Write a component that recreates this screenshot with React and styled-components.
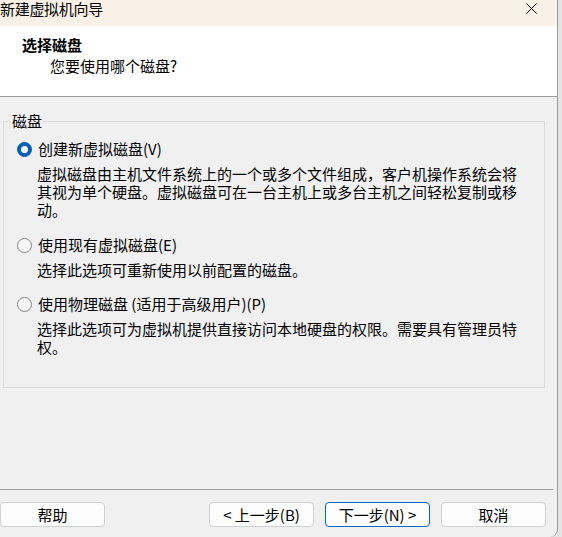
import React from "react";
import styled, { createGlobalStyle } from "styled-components";

// global
const GlobalStyle = createGlobalStyle`
	html, body {
		margin: 0;
		padding: 0;
		background: #e4e4e4;
	}
	body {
		font-family: "Noto Sans CJK SC", "Noto Sans", sans-serif;
		font-size: 15px;
		color: #000;
	}
`;

// window frame
const Window = styled.div`
	width: 557px;
	height: 537px;
	border-right: 1px solid #9c9c9c;
	background: #f0f0f0;
	display: flex;
	flex-direction: column;
	overflow: hidden;
	border-bottom-right-radius: 8px;
`;

const TitleBar = styled.div`
	height: 26px;
	background: #f9f1e7;
	display: flex;
	align-items: flex-start;
	justify-content: space-between;
	flex-shrink: 0;
`;

const TitleText = styled.span`
	font-size: 15px;
	line-height: 18px;
	letter-spacing: -0.3px;
`;

const CloseButton = styled.div`
	width: 46px;
	height: 20px;
	display: grid;
	place-items: center;
	margin-right: 3px;
	margin-top: -2px;
`;

// header
const Header = styled.div`
	height: 71px;
	background: #fff;
	border-bottom: 1px solid #a0a0a0;
	padding: 9px 0 0 22px;
	box-sizing: border-box;
	flex-shrink: 0;
`;

const HeaderTitle = styled.div`
	font-weight: 700;
	line-height: 20px;
`;

const HeaderSub = styled.div`
	line-height: 20px;
	margin: 1px 0 0 28px;
`;

// body
const Body = styled.div`
	height: 392px;
	padding: 15px 12px 0 3px;
	box-sizing: border-box;
	flex-shrink: 0;
`;

const GroupBox = styled.fieldset`
	margin: 0;
	padding: 9px 10px 31px 7px;
	border: 1px solid #dcdcdc;
	border-radius: 0;
	min-width: 0;
`;

const Legend = styled.legend`
	padding: 0 1px;
	line-height: 18px;
`;

const Option = styled.div`
	margin-left: 6px;
	margin-bottom: ${(p) => p.$gap}px;
`;

const OptionRow = styled.label`
	display: flex;
	align-items: center;
	gap: 6px;
	height: 20px;
	line-height: 20px;
`;

const Radio = styled.span`
	width: 15px;
	height: 15px;
	border-radius: 50%;
	box-sizing: border-box;
	flex-shrink: 0;
	display: grid;
	place-items: center;
	background: ${(p) => (p.$checked ? "#005fb8" : "#f6f6f6")};
	border: 1px solid ${(p) => (p.$checked ? "#005fb8" : "#868686")};

	&::after {
		content: "";
		display: ${(p) => (p.$checked ? "block" : "none")};
		width: 7px;
		height: 7px;
		border-radius: 50%;
		background: #fff;
	}
`;

const Description = styled.div`
	width: 485px;
	margin: 6px 0 0 20px;
	line-height: 18px;
`;

// footer
const Separator = styled.div`
	height: 1px;
	background: #a0a0a0;
	margin-right: 4px;
	flex-shrink: 0;
`;

const Footer = styled.div`
	display: flex;
	align-items: center;
	padding: 12px 11px 0 0;
`;

const ButtonGroup = styled.div`
	display: flex;
	gap: 11px;
	margin-left: auto;
`;

const Button = styled.button`
	width: 105px;
	height: 25px;
	padding: 0;
	box-sizing: border-box;
	font-family: inherit;
	font-size: 15px;
	line-height: 20px;
	color: #000;
	background: #fdfdfd;
	border: 1px solid ${(p) => (p.$primary ? "#0067c0" : "#d0d0d0")};
	border-radius: 4px;
`;

const options = [
	{
		label: "创建新虚拟磁盘(V)",
		checked: true,
		desc: "虚拟磁盘由主机文件系统上的一个或多个文件组成，客户机操作系统会将其视为单个硬盘。虚拟磁盘可在一台主机上或多台主机之间轻松复制或移动。",
		gap: 16,
	},
	{
		label: "使用现有虚拟磁盘(E)",
		desc: "选择此选项可重新使用以前配置的磁盘。",
		gap: 15,
	},
	{
		label: "使用物理磁盘 (适用于高级用户)(P)",
		desc: "选择此选项可为虚拟机提供直接访问本地硬盘的权限。需要具有管理员特权。",
		gap: 0,
	},
];

export default function App() {
	return (
		<>
			<GlobalStyle />
			<Window>
				<TitleBar>
					<TitleText>新建虚拟机向导</TitleText>
					<CloseButton>
						<svg width="11" height="11" viewBox="0 0 11 11">
							<path d="M0.5 0.5 L10.5 10.5 M10.5 0.5 L0.5 10.5" stroke="#000" strokeWidth="1" />
						</svg>
					</CloseButton>
				</TitleBar>
				<Header>
					<HeaderTitle>选择磁盘</HeaderTitle>
					<HeaderSub>您要使用哪个磁盘?</HeaderSub>
				</Header>
				<Body>
					<GroupBox>
						<Legend>磁盘</Legend>
						{options.map((o) => (
							<Option key={o.label} $gap={o.gap}>
								<OptionRow>
									<Radio $checked={o.checked} />
									{o.label}
								</OptionRow>
								<Description>{o.desc}</Description>
							</Option>
						))}
					</GroupBox>
				</Body>
				<Separator />
				<Footer>
					<Button>帮助</Button>
					<ButtonGroup>
						<Button>&lt; 上一步(B)</Button>
						<Button $primary>下一步(N) &gt;</Button>
						<Button>取消</Button>
					</ButtonGroup>
				</Footer>
			</Window>
		</>
	);
}
